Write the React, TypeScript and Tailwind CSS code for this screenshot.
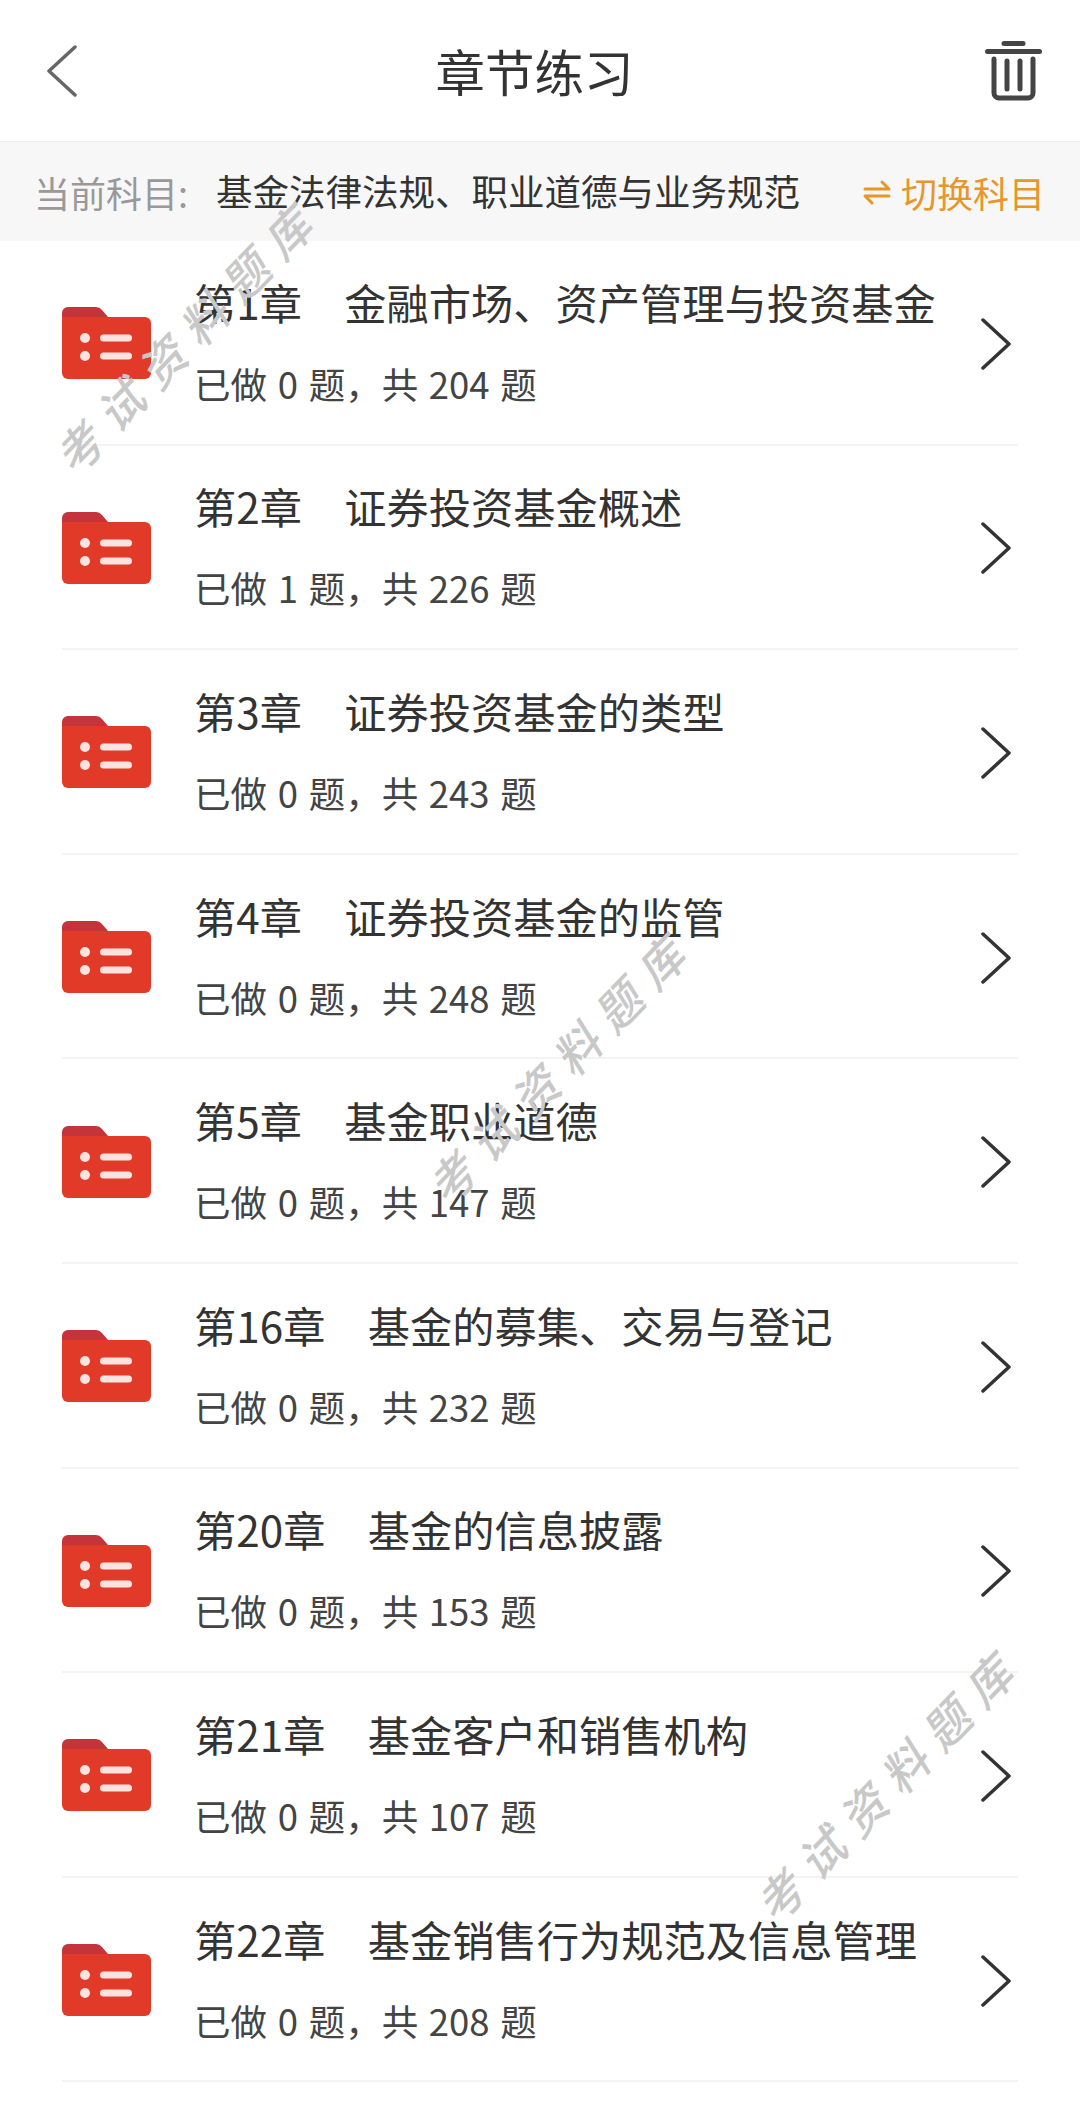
const chapters = [
  { no: "第1章", name: "金融市场、资产管理与投资基金", done: 0, total: 204 },
  { no: "第2章", name: "证券投资基金概述", done: 1, total: 226 },
  { no: "第3章", name: "证券投资基金的类型", done: 0, total: 243 },
  { no: "第4章", name: "证券投资基金的监管", done: 0, total: 248 },
  { no: "第5章", name: "基金职业道德", done: 0, total: 147 },
  { no: "第16章", name: "基金的募集、交易与登记", done: 0, total: 232 },
  { no: "第20章", name: "基金的信息披露", done: 0, total: 153 },
  { no: "第21章", name: "基金客户和销售机构", done: 0, total: 107 },
  { no: "第22章", name: "基金销售行为规范及信息管理", done: 0, total: 208 },
];

function FolderIcon() {
  return (
    <svg width="89" height="72" viewBox="0 0 89 72" className="mt-[2px] shrink-0">
      <path d="M0 6a6 6 0 0 1 6-6h28a8 8 0 0 1 6 3l6 7H0z" fill="#c4343a" />
      <path d="M0 10h83a6 6 0 0 1 6 6v50a6 6 0 0 1-6 6H6a6 6 0 0 1-6-6z" fill="#e23a28" />
      <circle cx="23" cy="31" r="5" fill="#fde3df" />
      <circle cx="23" cy="49" r="5" fill="#fde3df" />
      <rect x="38" y="27.5" width="32" height="7" rx="3.5" fill="#fde3df" />
      <rect x="38" y="45.5" width="32" height="7" rx="3.5" fill="#fde3df" />
    </svg>
  );
}

function Watermark({ className }: { className: string }) {
  return (
    <div className={`absolute -translate-x-1/2 -translate-y-1/2 -rotate-[46deg] whitespace-nowrap text-[46px] italic font-medium leading-none tracking-[14px] text-[#c8c8c8] pointer-events-none ${className}`}>
      考试资料题库
    </div>
  );
}

export default function App() {
  return (
    <div className="relative h-[2124px] w-[1080px] overflow-hidden bg-white font-['Noto_Sans_CJK_SC','Noto_Sans',sans-serif] text-[#333]">
      <header className="flex h-[141px] items-center justify-between pl-[46px] pr-[38px]">
        <svg width="32" height="52" viewBox="0 0 32 52" fill="none" stroke="#666" strokeWidth="3.5" strokeLinecap="round" strokeLinejoin="round">
          <path d="M29 2 3 26l26 24" />
        </svg>
        <h1 className="ml-[6px] text-[49.5px] font-normal leading-none text-[#333]">章节练习</h1>
        <svg width="57" height="60" viewBox="0 0 57 60" fill="none" stroke="#444" strokeWidth="5" strokeLinecap="round" strokeLinejoin="round">
          <path d="M19 2.5h19" />
          <path d="M2.5 10.5h52" />
          <path d="M9 18v34a5 5 0 0 0 5 5h29a5 5 0 0 0 5-5V18" />
          <path d="M22 20v28" />
          <path d="M35 20v28" />
        </svg>
      </header>

      <div className="flex h-[100px] items-center justify-between border-t border-[#eeeeee] bg-[#f7f7f7] pl-[34px] pr-[35px] text-[36px] leading-none">
        <div className="flex items-center">
          <span className="w-[182px] text-[#999]">当前科目:</span>
          <span className="text-[36.5px] text-[#333]">基金法律法规、职业道德与业务规范</span>
        </div>
        <div className="flex items-center gap-[10px] text-[#e8962a]">
          <svg width="28" height="28" viewBox="0 0 28 28" fill="none" stroke="#e8962a" strokeWidth="3" strokeLinecap="round" strokeLinejoin="round">
            <path d="M2 11h24l-7-7" />
            <path d="M26 18H2l7 7" />
          </svg>
          <span>切换科目</span>
        </div>
      </div>

      <div className="mx-[62px]">
        {chapters.map((c) => (
          <div key={c.no} className="flex h-[204.6px] items-center border-b-2 border-[#f3f3f3]">
            <FolderIcon />
            <div className="ml-[43px] flex flex-1 flex-col pb-[6px]">
              <div className="text-[42.25px] leading-[50px] text-[#333]">
                {c.no}　{c.name}
              </div>
              <div className="mt-[39px] text-[36.5px] leading-[36px] text-[#444] [word-spacing:2.5px]">
                已做 {c.done} 题，共 {c.total} 题
              </div>
            </div>
            <svg className="mr-[6px] mt-[3px] shrink-0" width="32" height="52" viewBox="0 0 32 52" fill="none" stroke="#333" strokeWidth="3.5" strokeLinecap="round" strokeLinejoin="round">
              <path d="M3 2l26 24L3 50" />
            </svg>
          </div>
        ))}
      </div>

      <Watermark className="left-[186px] top-[335px]" />
      <Watermark className="left-[559px] top-[1065px]" />
      <Watermark className="left-[887px] top-[1783px]" />
    </div>
  );
}
